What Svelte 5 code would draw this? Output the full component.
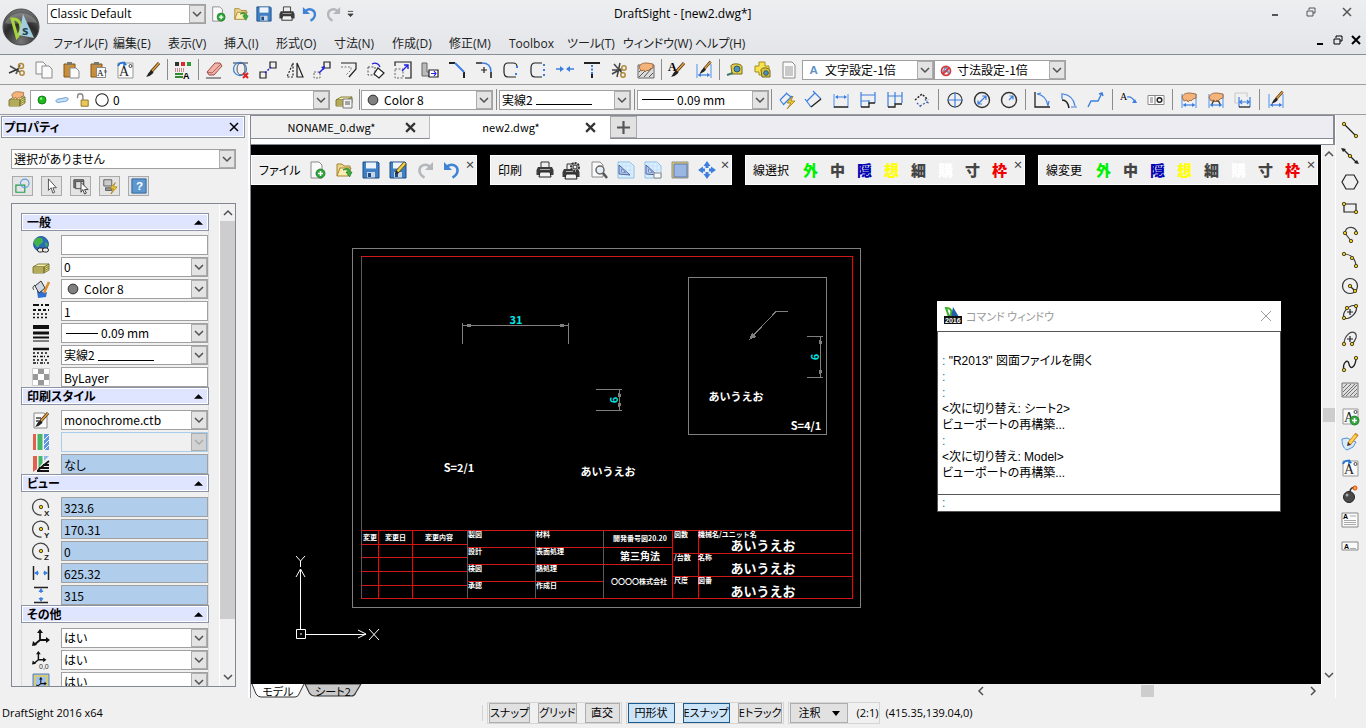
<script>
  const BLUE = "#3c7fe0";

  // small building blocks shared by several icons
  const dot = (x, y) =>
    `<circle cx="${x}" cy="${y}" r="1.7" fill="#f5c518" stroke="#3a3a20" stroke-width=".9"/>`;
  const line = (d, color = "#222", w = 1.2, extra = "") =>
    `<path d="${d}" fill="none" stroke="${color}" stroke-width="${w}" ${extra}/>`;
  const page = (x, y, w, h) =>
    `<path d="M${x} ${y}h${w - 3}l3 3v${h - 3}h-${w}z" fill="#fafafa" stroke="#8a8a8a"/>`;
  const dashed = 'stroke-dasharray="2 1.5"';
  const brush =
    '<path d="M16 2L8 11" stroke="#3a2a10" stroke-width="3"/><path d="M16 2L9 10" stroke="#e09a3c" stroke-width="1.8"/><path d="M8.500 9.500l2 2C8 15 5 15.500 3 16c2-2 2-5 5.500-6.500z" fill="#222"/>';
  const hand =
    '<path d="M2 6c2-4 5-4 8-4l6 1v4l-3 1-2 2-1-1-2 2-1-2-3 1z" fill="#f3b37a" stroke="#8f5a2c" stroke-width=".8"/>';
  const stack =
    '<path d="M1 9l5-3h11l-5 3z" fill="#f6f0b0" stroke="#77702c" stroke-width=".9"/><path d="M1 9v6h11V9zM12 9l5-3v6l-5 3z" fill="#e6dc80" stroke="#77702c" stroke-width=".9"/><path d="M1 11h11l5-3M1 13h11l5-3" fill="none" stroke="#77702c" stroke-width=".9"/>';
  const floppy =
    '<path d="M1 1h15l1 1v15H1z" fill="#3f7fc4" stroke="#1f4c86"/><path d="M4 1.500h10v6H4z" fill="#eef4fa"/><path d="M5 11h8v5.500H5z" fill="#c9d6e4"/><path d="M6 12h3v4H6z" fill="#1f4c86"/>';
  const folder =
    '<path d="M2 15V3h5l2 2h6v3" fill="#e9d58e" stroke="#a8852c"/><path d="M2 15l3-8h11l-3 8z" fill="#fbeeb4" stroke="#a8852c"/><path d="M8 9c3-1 5 0 5 2h-2l3.500 5L17 11h-1.500C15 7 11 6.500 8 9z" fill="#3fae3f" stroke="#1d7a25" stroke-width=".7"/>';
  const printer =
    '<path d="M5 1h8v6H5z" fill="#eee" stroke="#333"/><path d="M2 6h14l1.500 3v5H.5V9z" fill="#3c3c3c"/><path d="M4 11h10l1 5H3z" fill="#f2f2f2" stroke="#222"/><path d="M4 8.500h10" stroke="#aaa"/>';
  const drawingSheet =
    '<path d="M1 1h12l4 4v12H1z" fill="#dcefff" stroke="#8dbde6"/><path d="M1 5h14M1 9h16M1 13h16M5 1v16M9 1v16M13 1v16" stroke="#c3e0f7"/><path d="M2 4v9l11 1z" fill="#b7c9ea" stroke="#4a67a8"/><path d="M4.500 8v3l4 .5z" fill="#fff" stroke="#4a67a8" stroke-width=".7"/>';
  const extents = line("M2 3v14M16 3v14", "#6aa2ee", 1.2);
  const spanArrow =
    line("M4 14h10", BLUE) + `<path d="M2.500 14l3.500-2v4zM15.500 14L12 12v4z" fill="${BLUE}"/>`;
  const undoArrow = (color) =>
    `<path d="M4 5.500c5-4 11-.5 10.500 4.500-.2 3-2 5-5 6.500" fill="none" stroke="${color}" stroke-width="2.600"/><path d="M1 1v8h8z" fill="${color}"/>`;
  const plusBadge =
    '<circle cx="12.500" cy="12.500" r="4.500" fill="#2fa53a" stroke="#167a22" stroke-width=".8"/><path d="M12.500 10v5M10 12.500h5" stroke="#fff" stroke-width="1.500"/>';
  const centre = (letter) =>
    `<path d="M16.500 10a8 8 0 1 0-7 7" fill="none" stroke="#444" stroke-width="1.300"/>${dot(9, 9)}<text x="12" y="18" font-size="8" font-weight="700" fill="#222">${letter}</text>`;
  const axes =
    '<path d="M8 2v9h8M8 11l-6 5" fill="none" stroke="#111" stroke-width="1.800"/><path d="M8 0l3 4H5zM18 11l-4-3v6zM0 17l1-5 4 4z" fill="#111"/>';
  const noteA =
    '<path d="M2 2h15v15H2z" fill="#fafafa" stroke="#999"/><text x="3" y="15" font-size="14" font-family="Liberation Serif, serif" fill="#222">A</text>';

  const icons = {
    new: page(3, 1, 11, 16) + plusBadge,
    open: folder,
    save: floppy,
    print: printer,
    undo: undoArrow("#3f83d6"),
    redo: `<g transform="translate(18 0) scale(-1 1)">${undoArrow("#b3b6ba")}</g>`,
    cut: '<path d="M2 5l10 6M8 13l4-9" stroke="#555" stroke-width="1.800"/><path d="M1 12l9-4" stroke="#333" stroke-width="1.500"/><circle cx="13" cy="5" r="2.500" fill="none" stroke="#b08a3c" stroke-width="1.500"/><circle cx="14" cy="12" r="2.200" fill="none" stroke="#b08a3c" stroke-width="1.500"/>',
    copy: page(1, 1, 10, 12) + page(7, 5, 10, 12),
    paste:
      '<path d="M2 3h11v13H2z" fill="#c78f3d" stroke="#855714"/><path d="M5 1h5v3H5z" fill="#777"/>' +
      page(8, 7, 9, 10),
    pasteA:
      '<path d="M2 3h11v13H2z" fill="#c78f3d" stroke="#855714"/><path d="M5 1h5v3H5z" fill="#777"/><path d="M7.500 6.500h9v10h-9z" fill="#fafafa" stroke="#888"/><text x="8" y="15" font-size="9" font-family="Liberation Serif, serif">A°</text>',
    noteA:
      noteA +
      '<circle cx="14.500" cy="5" r="1.500" fill="none" stroke="#444"/><path d="M2 5c1-3 4-4 7-3" fill="none" stroke="#2273d6" stroke-width="1.800"/><path d="M7 5l4-1-3-4z" fill="#2273d6"/>',
    brush,
    matchAll:
      '<path d="M1 1h4v4H1z" fill="#333"/><path d="M7 1h4v4H7z" fill="#e02626"/><path d="M13 1h4v4h-4z" fill="#2f9a33"/><path d="M1 8h9M1 10h9" stroke="#a22" stroke-dasharray="1 1"/><path d="M1 13h8M1 16h8" stroke="#2f8a33" stroke-width="2"/><text x="9" y="18" font-size="9" font-weight="700">A</text>',
    erase:
      '<path d="M2 11L10 2h5l2 3-8 9H4z" fill="#f3b1a8" stroke="#9a5048"/><path d="M2 11l5 1 9-9" fill="none" stroke="#9a5048" stroke-width=".8"/><path d="M1 17h15" stroke="#777" stroke-width="1.500"/>',
    purge:
      line("M1 2h15", "#333", 1) +
      '<circle cx="8" cy="8" r="6.500" fill="none" stroke="#3f83d6" stroke-width="1.300"/><ellipse cx="9" cy="8" rx="4" ry="6" fill="none" stroke="#555"/><path d="M11 12l5 5M16 12l-5 5" stroke="#e02020" stroke-width="2"/>',
    copyObj:
      line("M1 11h6v6H1zM11 1h6v6h-6z") + line("M6 12l6-6", "#2222dd", 1.5, dashed),
    mirror: line("M7 2v14H1z", "#222", 1.2, dashed) + line("M11 2v14h6z"),
    move:
      line("M1 11h6v6H1z", "#666", 1, dashed) +
      line("M11 1h6v6h-6z") +
      line("M6 12l5-5", "#2222dd", 1.5) +
      '<path d="M12 5l-4 1 3 3z" fill="#22d"/>',
    offset: line("M1 2h15v6L9 16") + line("M1 6h10v3l-5 5", "#777", 1, dashed),
    rotate:
      line("M1 6h7v8H1z", "#555", 1, dashed) +
      '<path d="M11 7l6 5-5 5-5-4z" fill="#fff" stroke="#222" stroke-width="1.200"/>' +
      line("M5 3c4-2 7 0 8 3", "#22d", 1.2),
    scale:
      line("M1 5V1h16v16h-6") + line("M1 8h8v9H1z", "#666", 1, dashed) + line("M8 10l6-6M10 4h4v4", "#22d", 1.4),
    stretch:
      '<path d="M1 2h5v9h4v4H1z" fill="#bbb" stroke="#666"/>' +
      '<path d="M8 9h9v7H8z" fill="#fff" stroke="#222" stroke-width="1.200"/>' +
      line("M10 12.500h5M13 10l2 2.500-2 2.500", "#22d"),
    chamfer: line("M1 2h6M16 11v6", "#222", 2) + line("M7 2l9 9", BLUE, 2),
    fillet:
      line("M1 2h6M16 11v6", "#222", 1.6) + line("M7 2c6 0 9 3 9 9", BLUE, 1.4) + line("M9 6v6M6 9h6"),
    corner: line("M15 6c0-3-1-4-4-4H6C3 2 2 4 2 7v4c0 3 1 5 4 5h8") + `<path d="M14 5h2v2h-2zM13 12h2v2h-2z" fill="${BLUE}"/>`,
    corner2: line("M13 2H6C3 2 2 4 2 7v4c0 3 1 5 4 5h7") + `<path d="M14 3h2v2h-2zM14 8h2v2h-2zM14 13h2v2h-2z" fill="${BLUE}"/>`,
    join:
      line("M0 8h7M18 8h-7", BLUE, 1.5) + `<path d="M8 8L4 5v6zM10 8l4-3v6z" fill="${BLUE}"/>`,
    trim: line("M1 2h16", "#222", 2) + line("M9 4v9", BLUE, 2, dashed) + line("M9 13v4", "#222", 2),
    explode:
      line("M2 9h10M4 3l8 9M10 2L7 16M2 13l9-5", "#444", 1.5) +
      '<circle cx="14" cy="7" r="2.200" fill="none" stroke="#b08a3c" stroke-width="1.500"/><circle cx="13" cy="14" r="2.200" fill="none" stroke="#b08a3c" stroke-width="1.500"/>',
    editHatch:
      '<path d="M1 4h16v13H1z" fill="#ddd" stroke="#666"/><path d="M2 11l4-4M2 16l9-9M7 16l8-9M12 16l4-4" stroke="#555"/>' + hand,
    styleText: '<text x="0" y="10" font-size="12" font-weight="700" font-family="Liberation Serif, serif">A</text>' + brush,
    styleDim: extents + spanArrow + `<g transform="translate(2 -1) scale(.85)">${brush}</g>`,
    measure:
      '<path d="M5 5c0-3 11-3 11 1v7H6z" fill="#e7cf45" stroke="#766a1e"/><circle cx="11" cy="8" r="3" fill="#4f94b5" stroke="#265a74"/><path d="M7 12l-6 2" stroke="#476" stroke-width="2"/>',
    measure2:
      '<path d="M2 5h4V1h6v4h4v6h-4v3H6v-3H2z" fill="#f6e34e" stroke="#a18e1e"/><path d="M8 9c0-3 9-3 9 1v6H9z" fill="#d9c041" stroke="#766a1e"/><circle cx="13" cy="12" r="2.300" fill="#4f94b5" stroke="#265a74"/>',
    list: page(3, 1, 12, 16) + line("M5 6h8M5 8h8M5 10h8M5 12h8M5 14h8", "#999", 1),
    layers: stack + `<g transform="translate(2 -1) scale(.85)">${hand}</g>`,
    layerState: stack + '<path d="M8 8h9v9H8z" fill="#f4f4f4" stroke="#777"/><path d="M10 11h5M10 13h5" stroke="#555"/>',
    stack,
    dimSmart:
      line("M2 9l7-7M5 14l9-9M2 9l4 5M8 2l5 4", BLUE, 1.2) +
      '<path d="M15 5l-6 7h4l-4 6 8-8h-4z" fill="#f6d02c" stroke="#a07b10" stroke-width=".8"/>',
    dimAligned: line("M2 10l8-8M0 8l6 8M8 0l8 8", BLUE, 1.2) + line("M6 16l10-8", "#222", 1.5),
    dimLinear: extents + line("M2 16h14", "#222", 1.5) + `<path d="M4 6h10" stroke="${BLUE}"/><path d="M3 6l3-2v4zM15 6l-3-2v4z" fill="${BLUE}"/>`,
    dimBase: line("M2 1v15M10 9v4M16 1v11M2 4h14M2 10h8", BLUE) + line("M2 16h8v-4h6", "#222", 1.3),
    dimCont: line("M2 1v15M9 1v12M16 1v11M2 5h14", BLUE) + line("M2 16h7v-3h7", "#222", 1.3),
    dimJog: line("M2 9l7-6 6 6", "#222", 1.5, dashed) + line("M4 12l4 4M12 8l4 5M7 15l7-4", "#3a5fa8", 1.2, dashed),
    centreMark: '<circle cx="9" cy="9" r="7" fill="none" stroke="#333" stroke-width="1.200"/>' + line("M9 1v5M9 12v5M1 9h5M12 9h5M9 6v6M6 9h6", BLUE),
    diameter: '<circle cx="9" cy="9" r="7.500" fill="none" stroke="#333" stroke-width="1.400"/>' + line("M5 13l8-8M5 9.500v3.500h4M9 5h4v4", BLUE),
    radius: '<circle cx="9" cy="9" r="7.500" fill="none" stroke="#333" stroke-width="1.400"/>' + line("M9 9l4-4M9.500 5H13v3.500", BLUE),
    angle: line("M2 1v15h15", "#222", 1.3) + line("M4 3c7 1 10 5 11 12M4 3l4-1M15 15l1-5", BLUE),
    arcLen: line("M2 9c4 0 6 2 7 8", "#222", 1.6) + line("M2 2v6M3 3c7 1 11 5 12 12M11 16h6", BLUE),
    ordinate: line("M1 16l3-6h7l4-8M12 3l3-1 1 3", BLUE, 1.4),
    leader: '<text x="0" y="9" font-size="10" font-family="Liberation Serif, serif">A</text>' + line("M7 6c4-1 6 1 8 5", BLUE, 1.2) + `<path d="M17 12l-5 0 3-4z" fill="${BLUE}"/>`,
    tolerance: '<path d="M1 4.500h16v9H1z" fill="#fff" stroke="#888"/><path d="M3 7h3M3 9h3M3 11h3M8 5v9" stroke="#777"/><circle cx="12.500" cy="9" r="2.300" fill="none" stroke="#222" stroke-width="1.500"/>',
    dimEdit: extents + spanArrow + hand,
    dimEditA: extents + spanArrow + '<path d="M5 13l4-8 4 8M7 10h4" fill="none" stroke="#444" stroke-width="1.500"/>' + hand,
    dimUpdate: line("M1 2h12v4M1 2v10h3", "#ccc") + line("M5 6v10M16 6v10M6 11h9M8 9l-2 2 2 2M13 9l2 2-2 2", BLUE) + line("M5 16h11", "#222", 1.3),
    selShapes: '<path d="M1 8h10v8H1z" fill="none" stroke="#1f9d4b" stroke-width="1.300"/><circle cx="11" cy="6" r="4.800" fill="none" stroke="#5b9be0" stroke-width="1.300"/>',
    cursor: '<path d="M5 1v13l3-3 2 6 2-1-2-5h4z" fill="#fff" stroke="#444"/>',
    pickSet: '<path d="M1 2h11v9H1z" fill="#888" stroke="#333"/><path d="M3 4h9v8H3z" fill="#ddd" stroke="#444"/><path d="M9 5v11l2-3 2 5 2-1-2-4h4z" fill="#fff" stroke="#333"/>',
    quickSel: '<path d="M2 2h9v7H2z" fill="#ccc" stroke="#555"/><path d="M4 11h7v3H4z" fill="#999" stroke="#555"/><path d="M15 5l-6 7h4l-3 6 7-8h-4z" fill="#f6d02c" stroke="#a07b10" stroke-width=".8"/>',
    help: '<path d="M1 1h16v16H1z" fill="#5d97cf" stroke="#2a5f98"/><text x="5.500" y="14" font-size="13" font-weight="700" fill="#fff">?</text>',
    globe: '<circle cx="9" cy="8" r="7.500" fill="#2b6cc0" stroke="#164a8a" stroke-width=".8"/><path d="M5 2c4-1 6 0 6 3s-3 2-4 5-4-1-5-3 1-4 3-5zM13 6l3 2-2 4z" fill="#43b24a"/><rect x="5.500" y="12" width="6" height="4" rx="2" fill="#eee" stroke="#222"/><rect x="10.500" y="12" width="6" height="4" rx="2" fill="#eee" stroke="#222"/>',
    paint: '<path d="M5 11c4-3 6 3 10 1l-1 5-8 1z" fill="#2f6fd0"/><path d="M3 6l6-5 4 7-6 5z" fill="#cfd8e4" stroke="#333"/><path d="M3 5c-3 2-2 4-1 5" fill="none" stroke="#333"/><path d="M17 2l-5 11" stroke="#d98f2f" stroke-width="2.500"/>',
    lineScale: line("M1 3h16", "#111", 2, 'stroke-dasharray="6 2 2 2"') + line("M1 8h16", "#111", 2, 'stroke-dasharray="3 2"') + line("M1 12h16M1 15.500h16", "#111", 1.6, 'stroke-dasharray="2 2"'),
    weight: line("M1 3h16", "#111", 4) + line("M1 9h16", "#111", 3) + line("M1 13.500h16", "#111", 2) + line("M1 17h16", "#111", 1),
    lineStyle: line("M1 3h16", "#111", 2.5) + line("M1 7h16M1 14h16", "#111", 1.5, 'stroke-dasharray="2 2"') + line("M1 10.500h16M1 17h16", "#111", 1.5, 'stroke-dasharray="3 1 1 2"'),
    checker: '<path d="M0 0h18v18H0z" fill="#fff"/><path d="M6 0h6v6H6zM0 6h6v6H0zM12 6h6v6h-6zM6 12h6v6H6z" fill="#999"/><path d="M.5.5h17v17H.5z" fill="none" stroke="#ccc"/>',
    plotStyle: page(2, 2, 13, 15) + line("M4 7h5M4 10h3", "#444", 1.5) + brush,
    bars: '<path d="M1 1h3v16H1z" fill="#e2604c"/><path d="M5.500 1h5v16h-5z" fill="#45b768"/><path d="M12 1h5v16h-5z" fill="#5d97e0"/><path d="M12 7l5-5M12 12l5-5M12 17l5-5" stroke="#fff"/>',
    bars2: '<path d="M1 1h4v13l-4 3z" fill="#e2604c"/><path d="M6.500 1h4v7l-4 5z" fill="#45b768"/><path d="M12 1h5L12 6z" fill="#8db8ee"/><path d="M6 15l11-9M7 13h10M5 16h12M11 10h6" stroke="#111" stroke-width="1.800"/>',
    centreX: centre("X"),
    centreY: centre("Y"),
    centreZ: centre("Z"),
    width: line("M1.500 2v14M16.500 2v14", "#222", 1.5) + line("M3 9h4M11 9h4", BLUE) + `<path d="M2 9l4-2.500v5zM16 9l-4-2.500v5z" fill="${BLUE}"/>`,
    height: line("M2 1.500h14M2 16.500h14", "#222", 1.5) + line("M9 3v4M9 11v4", BLUE) + `<path d="M9 2l2.500 4h-5zM9 16l2.500-4h-5z" fill="${BLUE}"/>`,
    axes,
    axes0: `<g transform="scale(.8)">${axes}</g><text x="7" y="18" font-size="7" fill="#333">0,0</text>`,
    axesVp: `<path d="M1 1h16v16H1z" fill="#9fc2ee" stroke="#5f7fae"/><path d="M3 3h12v13H3z" fill="none" stroke="#e6cf4e" stroke-width="1.500"/><g transform="translate(4 4) scale(.6)">${axes}</g>`,
    saveAs: floppy + `<path d="M16 2L8 11" stroke="#5b4a10" stroke-width="4"/><path d="M16 2L8 11" stroke="#f2cf45" stroke-width="2.500"/><path d="M6 13l1-4 3 3z" fill="#222"/>`,
    printSet: `<g transform="translate(-1 2)">${printer}</g>` + '<circle cx="12" cy="6" r="4" fill="#bbb" stroke="#333" stroke-width="2" stroke-dasharray="2 1"/><circle cx="12" cy="6" r="2" fill="#eee" stroke="#333"/>',
    preview: page(2, 1, 11, 15) + '<circle cx="10" cy="9" r="4" fill="#e6eef6" stroke="#666" stroke-width="1.500"/><path d="M13 12l4 5" stroke="#555" stroke-width="2.500"/>',
    sheet: drawingSheet,
    sheet2: drawingSheet + '<path d="M10 12h7v5h-7z" fill="#f7f7f7" stroke="#888"/>',
    viewport: '<path d="M1 1h16v16H1z" fill="#e5cf63" stroke="#8f8f8f"/><path d="M3 3h13v13H3z" fill="#9ab6e2" stroke="#5a7ab5"/>',
    pan: `<path d="M9 0l3.500 5h-7zM9 18l3.500-5h-7zM0 9l5-3.500v7zM18 9l-5-3.500v7z" fill="${BLUE}"/>` + line("M9 4v3M9 11v3M4 9h3M11 9h3", BLUE, 3),
    line: line("M3 3l12 12") + dot(3, 3) + dot(15, 15),
    infLine: line("M2 2l14 14") + '<path d="M0 1l5 1-3 3zM18 17l-5-1 3-3z" fill="#222"/>' + dot(9, 9),
    polygon: line("M5 2h8l4 7-4 7H5L1 9z"),
    rect: line("M3 5h12v8H3z") + dot(3, 5) + dot(15, 13),
    polyline: line("M10 16L4 8c1-8 11-7 12 0", "#444") + dot(4, 8) + dot(15, 8) + dot(10, 16),
    arc: line("M3 3c7 0 12 5 12 13", "#444") + dot(3, 3) + dot(11, 7) + dot(15, 15),
    circle: '<circle cx="9" cy="9" r="7.500" fill="none" stroke="#333" stroke-width="1.200"/>' + line("M9 9l5 5") + dot(9, 9) + dot(14, 14),
    ellipse: '<ellipse cx="9" cy="9" rx="8" ry="4.500" transform="rotate(-45 9 9)" fill="none" stroke="#333" stroke-width="1.200"/>' + line("M9 6v6M6 9h6") + dot(6, 5) + dot(15, 3) + dot(3, 15),
    ellipseArc: line("M3 15C3 7 10 1 14 4c3 3 0 8-3 11", "#444") + line("M9 7v6M6 10h6") + dot(3, 15) + dot(11, 15),
    spline: line("M3 15C1 8 7 3 8 9s6 4 7-5", "#222", 1.4) + dot(3, 15) + dot(15, 3),
    hatch: '<path d="M1 2h16v14H1z" fill="#ddd" stroke="#777"/><path d="M2 7l4-4M2 11l8-8M2 15l12-12M5 15L16 4M9 15l7-7M13 15l3-3" stroke="#555" stroke-width=".8"/>',
    addNote: noteA + '<circle cx="14.500" cy="5" r="1.500" fill="none" stroke="#444"/>' + `<g transform="translate(1 1)">${plusBadge}</g>`,
    editNote: '<path d="M1 6l5-1 9 4-3 5-6 3c-4-2-5-6-5-11z" fill="#dcebfb" stroke="#4f8ed6"/><path d="M16 1L8 11" stroke="#c97b1c" stroke-width="4"/><path d="M15 2L8 11" stroke="#ffd34d" stroke-width="2.500"/><path d="M6 13l1-4 3 3z" fill="#333"/>',
    bomb: '<circle cx="8" cy="12" r="5.500" fill="#4a4a4a" stroke="#222"/><circle cx="6" cy="10" r="1.500" fill="#aaa"/><path d="M9 7c0-4 3-5 5-4" fill="none" stroke="#333" stroke-width="1.500"/><circle cx="14" cy="3" r="2" fill="#ffb02e" stroke="#e2401c"/>',
    note: '<path d="M1 2h16v14H1z" fill="#fafafa" stroke="#888"/><text x="2" y="8" font-size="7" font-weight="700">A</text>' + line("M9 5h6M3 9.500h12M3 11.500h12M3 13.500h12", "#aaa", 1),
    simpleNote: '<path d="M1 5h16v8H1z" fill="#fafafa" stroke="#888"/><text x="3" y="12" font-size="7" font-weight="700">A</text>' + line("M9 11.500h6", "#aaa", 1),
    textStyle: '<text x="4" y="14" font-size="13" font-weight="700" fill="#5f92c4">A</text>',
    dimStyle: '<text x="4" y="14" font-size="13" font-weight="700" fill="#5f92c4">A</text><circle cx="9" cy="10" r="5" fill="none" stroke="#d8383c" stroke-width="2"/><path d="M5.500 13.500l7-7" stroke="#d8383c" stroke-width="2"/>',
    color8: '<circle cx="9" cy="9" r="5.500" fill="#808080" stroke="#222"/>',
    white: '<circle cx="9" cy="9" r="7" fill="#fff" stroke="#222" stroke-width="1.200"/>',
    lamp: '<circle cx="9" cy="9" r="4.500" fill="#1dbb1d" stroke="#0a7a12"/><circle cx="8" cy="7.500" r="1.300" fill="#a6f7a6"/>',
    freeze: '<path d="M2 10c1-3 5-2 8-3s6-1 6 1-4 3-6 3-7 2-8-1z" fill="#c7e0f7" stroke="#5a94cc"/>',
    unlock: '<path d="M8 9h8v7H8z" fill="#e8c95a" stroke="#886a1c"/><path d="M10 9V5c0-4-6-4-6 0v2" fill="none" stroke="#888" stroke-width="1.600"/>',
  };

  const menus = [
    "ファイル(F)", "編集(E)", "表示(V)", "挿入(I)", "形式(O)", "寸法(N)",
    "作成(D)", "修正(M)", "Toolbox", "ツール(T)", "ウィンドウ(W)", "ヘルプ(H)",
  ];
  const quick = ["new", "open", "save", "print", "undo", "redo"];
  const standard = [
    ["cut", "copy", "paste", "pasteA", "noteA", "brush"],
    ["matchAll"],
    ["erase", "purge", "copyObj", "mirror", "move", "offset", "rotate", "scale", "stretch",
      "chamfer", "fillet", "corner", "corner2", "join", "trim", "explode", "editHatch"],
    ["styleText", "styleDim"],
    ["measure", "measure2", "list"],
  ];
  const dims = [
    ["dimSmart", "dimAligned", "dimLinear", "dimBase", "dimCont", "dimJog"],
    ["centreMark", "diameter", "radius"],
    ["angle", "arcLen", "ordinate"],
    ["leader", "tolerance"],
    ["dimEdit", "dimEditA", "dimUpdate"],
    ["styleDim"],
  ];
  const draw = [
    "line", "infLine", "polygon", "rect", "polyline", "arc", "circle", "ellipse", "ellipseArc",
    "spline", "hatch", "addNote", "editNote", "noteA", "bomb", "note", "simpleNote",
  ];
  const sections = [
    {
      title: "一般",
      rows: [
        { icon: "globe", value: "" },
        { icon: "stack", value: "0", list: true },
        { icon: "paint", value: "Color 8", list: true, lead: ["color8"] },
        { icon: "lineScale", value: "1" },
        { icon: "weight", value: "0.09 mm", list: true, rule: "before" },
        { icon: "lineStyle", value: "実線2", list: true, rule: "after" },
        { icon: "checker", value: "ByLayer" },
      ],
    },
    {
      title: "印刷スタイル",
      rows: [
        { icon: "plotStyle", value: "monochrome.ctb", list: true },
        { icon: "bars", value: "", list: true, off: true },
        { icon: "bars2", value: "なし", locked: true },
      ],
    },
    {
      title: "ビュー",
      rows: [
        { icon: "centreX", value: "323.6", locked: true },
        { icon: "centreY", value: "170.31", locked: true },
        { icon: "centreZ", value: "0", locked: true },
        { icon: "width", value: "625.32", locked: true },
        { icon: "height", value: "315", locked: true },
      ],
    },
    {
      title: "その他",
      rows: [
        { icon: "axes", value: "はい", list: true },
        { icon: "axes0", value: "はい", list: true },
        { icon: "axesVp", value: "はい", list: true },
      ],
    },
  ];
  const pens = [
    ["外", "#00f000"], ["中", "#444"], ["隠", "#0000b4"], ["想", "#ffff00"],
    ["細", "#444"], ["購", "#fff"], ["寸", "#444"], ["枠", "#f00000"],
  ];
  const log = [
    "", ': "R2013" 図面ファイルを開く', ":", ":", "<次に切り替え: シート2>",
    "ビューポートの再構築...", ":", "<次に切り替え: Model>", "ビューポートの再構築...",
  ];
  const labels = [
    [363, 540, "変更"], [385, 540, "変更日"], [425, 540, "変更内容"],
    [468, 537, "製図"], [468, 554, "設計"], [468, 571, "検図"], [468, 588, "承認"],
    [536, 537, "材料"], [536, 554, "表面処理"], [536, 571, "熱処理"], [536, 588, "作成日"],
    [674, 537, "図数"], [674, 560, "/台数"], [674, 583, "尺度"],
    [698, 537, "機械名/ユニット名"], [698, 560, "名称"], [698, 583, "図番"],
    [613, 541, "開発番号図20.20"], [611, 584, "〇〇〇〇株式会社"],
  ];
</script>

{#snippet icon(name)}
  <svg class="icon" viewBox="0 0 18 18" aria-hidden="true">{@html icons[name]}</svg>
{/snippet}

{#snippet tool(name)}
  <button class="tool" aria-label={name}>{@render icon(name)}</button>
{/snippet}

{#snippet chevron(d)}
  <svg class="chevron" viewBox="0 0 10 10" aria-hidden="true"><path {d} /></svg>
{/snippet}

{#snippet combo(label, value, lead = [], rule = "", off = false)}
  <div class="combo" class:off>
    {#each lead as name}{@render icon(name)}{/each}
    {#if rule === "before"}<i class="rule"></i>{/if}
    <select aria-label={label} disabled={off} class:snug={rule === "after"}>
      <option>{value}</option>
    </select>
    {#if rule === "after"}<i class="rule after"></i>{/if}
    <span class="drop">{@render chevron("M1 3l4 4 4-4")}</span>
  </div>
{/snippet}

{#snippet penBar(title)}
  <div class="float">
    <span class="name">{title}</span>
    {#each pens as [glyph, color]}
      <button class="tool pen" style:color>{glyph}</button>
    {/each}
    <button class="shut" aria-label="close">×</button>
  </div>
{/snippet}

<div class="app">
  <header>
    <svg class="logo" viewBox="0 0 38 38" aria-hidden="true">
      <defs>
        <radialGradient id="ball" cx=".5" cy=".9" r=".9">
          <stop offset="0" stop-color="#777" />
          <stop offset=".55" stop-color="#2a2a2a" />
          <stop offset="1" stop-color="#777" />
        </radialGradient>
      </defs>
      <circle cx="19" cy="19" r="18" fill="url(#ball)" stroke="#4c4c4c" />
      <path d="M3 15a17 15 0 0 1 32 0c-9-3-23 3-32 0z" fill="#fff" opacity=".22" />
      <path d="M10 11c9-1 12 10 5 18z" fill="none" stroke="#a5d43c" stroke-width="3" />
      <path d="M21 6l11 24-15-3z" fill="#a9d4e6" opacity=".95" />
      <text x="20" y="27" font-size="13" font-weight="700" fill="#24444f">s</text>
    </svg>
    <div class="head">
      <div class="quick">
        {@render combo("workspace", "Classic Default")}
        {#each quick as name}{@render tool(name)}{/each}
        <svg class="more" viewBox="0 0 8 8" aria-hidden="true"><path d="M1 1h6M1 4h6L4 7z" /></svg>
        <h1>DraftSight - [new2.dwg*]</h1>
        <div class="win">
          <button aria-label="minimise"><svg viewBox="0 0 10 10"><path d="M2 8h6" stroke-width="2" /></svg></button>
          <button aria-label="restore"><svg viewBox="0 0 10 10"><path d="M3 3V1h6v5H7M1 4h6v5H1z" /></svg></button>
          <button aria-label="close"><svg viewBox="0 0 10 10"><path d="M1 1l8 8M9 1L1 9" stroke-width="1.5" /></svg></button>
        </div>
      </div>
      <nav>
        {#each menus as item}<a href="#menu">{item}</a>{/each}
        <div class="win doc">
          <button aria-label="minimise drawing"><svg viewBox="0 0 10 10"><path d="M2 9h6" stroke-width="2" /></svg></button>
          <button aria-label="restore drawing"><svg viewBox="0 0 10 10"><path d="M3 3V1h6v5H7M1 4h6v5H1z" /></svg></button>
          <button aria-label="close drawing"><svg viewBox="0 0 10 10"><path d="M1 1l8 8M9 1L1 9" stroke-width="2" /></svg></button>
        </div>
      </nav>
    </div>
  </header>

  <div class="bar">
    {#each standard as group, i}
      {#if i}<i class="sep"></i>{/if}
      {#each group as name}{@render tool(name)}{/each}
    {/each}
    <div class="w-style">{@render combo("text style", "文字設定-1倍", ["textStyle"])}</div>
    <div class="w-style">{@render combo("dimension style", "寸法設定-1倍", ["dimStyle"])}</div>
  </div>

  <div class="bar">
    {@render tool("layers")}
    <div class="w-layer">{@render combo("layer", "0", ["lamp", "freeze", "unlock", "white"])}</div>
    {@render tool("layerState")}
    <i class="sep"></i>
    <div class="w-style">{@render combo("color", "Color 8", ["color8"])}</div>
    <i class="sep wide"></i>
    <div class="w-style">{@render combo("line style", "実線2", [], "after")}</div>
    <i class="sep wide"></i>
    <div class="w-style">{@render combo("line weight", "0.09 mm", [], "before")}</div>
    {#each dims as group, i}
      <i class="sep" class:wide={i}></i>
      {#each group as name}{@render tool(name)}{/each}
    {/each}
  </div>

  <main>
    <aside>
      <div class="cap">
        <h2>プロパティ</h2>
        <button aria-label="close properties"><svg viewBox="0 0 10 10"><path d="M1 1l8 8M9 1L1 9" /></svg></button>
      </div>
      <div class="pick">{@render combo("selection", "選択がありません")}</div>
      <div class="modes">
        {#each ["selShapes", "cursor", "pickSet", "quickSel", "help"] as name}
          <button aria-label={name}>{@render icon(name)}</button>
        {/each}
      </div>
      <div class="props">
        <div class="list">
          {#each sections as section}
            <section>
              <h3>{section.title}<svg viewBox="0 0 10 5" aria-hidden="true"><path d="M0 5l5-5 5 5z" /></svg></h3>
              {#each section.rows as row}
                <div class="row">
                  {@render icon(row.icon)}
                  {#if row.list}
                    {@render combo(row.icon, row.value, row.lead, row.rule, row.off)}
                  {:else}
                    <input aria-label={row.icon} value={row.value} readonly={row.locked} />
                  {/if}
                </div>
              {/each}
            </section>
          {/each}
        </div>
        <div class="vscroll">
          {@render chevron("M1 7l4-4 4 4")}
          <i class="thumb"></i>
          {@render chevron("M1 3l4 4 4-4")}
        </div>
      </div>
    </aside>

    <div class="work">
      <div class="tabs">
        <div class="tab"><span>NONAME_0.dwg*</span><button aria-label="close tab"><svg viewBox="0 0 10 10"><path d="M1 1l8 8M9 1L1 9" stroke-width="2" /></svg></button></div>
        <div class="tab on"><span>new2.dwg*</span><button aria-label="close tab"><svg viewBox="0 0 10 10"><path d="M1 1l8 8M9 1L1 9" stroke-width="2" /></svg></button></div>
        <button class="add" aria-label="new tab"><svg viewBox="0 0 12 12"><path d="M6 0v12M0 6h12" stroke-width="2" /></svg></button>
      </div>

      <div class="stage">
        <div class="canvas">
          <svg class="drawing" aria-label="drawing">
            <g transform="translate(-251 -145)" fill="none" shape-rendering="crispEdges">
              <g stroke="#808080">
                <path d="M352.500 248.500h508v359h-508z" />
                <path d="M688.500 277.500h138v157h-138z" />
                <path d="M361.500 256v342M467.500 530v68M535.500 530v68M603.500 530v68" stroke="#5a5a5a" />
                <path d="M462.500 323v21M568.500 323v21M462 325.500h106M596 389.500h26M596 410.500h26M619.500 390v20M807 336.500h16M807 377.500h16M820.500 337v40" />
                <path d="M776 311.500h12M776 311.500L750 339" />
              </g>
              <path d="M361 256.500h492M361 598.500h492M361 530.500h491M361 544.500h106M361 557.500h106M361 571.500h106M361 585.500h106M467 547.500h205M467 564.500h205M467 581.500h136M672 553.500h180M672 576.500h180" stroke="#d01818" />
              <path d="M378.500 530v68M412.500 530v68M672.500 530v68M698.500 530v68M852.500 256v342" stroke="#ff0000" />
              <path d="M463 325.500l8-2v4zM568 325.500l-8-2v4zM619.500 390l-2 7h4zM619.500 410l-2-7h4zM820.500 337l-2 7h4zM820.500 377l-2-7h4zM749 340l3-7 4 4z" fill="#808080" />
            </g>
            <g transform="translate(-251 -145)">
              <path d="M300.500 629v-59M296 577l4.500-8 4.500 8M305 634.500h61M358 630l8 4-8 4M296.500 629.500h9v9h-9z" fill="none" stroke="#fff" />
              <path d="M300 634h2M296 556l4.500 5 4.500-5M300.500 561v6M369 629l10 11M379 629l-10 11" fill="none" stroke="#fff" />
              <g class="cyan">
                <text x="516" y="324">31</text>
                <text transform="translate(618 400) rotate(-90)">6</text>
                <text transform="translate(819 357) rotate(-90)">6</text>
              </g>
              <g>
                <text x="736" y="401">あいうえお</text>
                <text x="608" y="476">あいうえお</text>
                <text x="806" y="430">S=4/1</text>
                <text x="459" y="472">S=2/1</text>
              </g>
              <g class="big">
                <text x="763" y="550">あいうえお</text>
                <text x="763" y="573">あいうえお</text>
                <text x="763" y="596">あいうえお</text>
              </g>
              <g class="tiny">
                {#each labels as [x, y, label]}<text {x} {y}>{label}</text>{/each}
              </g>
              <text class="method" x="640" y="560">第三角法</text>
            </g>
          </svg>

          <div class="floats">
            <div class="float">
              <span class="name">ファイル</span>
              {#each ["new", "open", "save", "saveAs", "redo", "undo"] as name}{@render tool(name)}{/each}
              <button class="shut" aria-label="close">×</button>
            </div>
            <div class="float">
              <span class="name short">印刷</span>
              {#each ["print", "printSet", "preview", "sheet", "sheet2", "viewport", "pan"] as name}{@render tool(name)}{/each}
              <button class="shut" aria-label="close">×</button>
            </div>
            {@render penBar("線選択")}
            {@render penBar("線変更")}
          </div>

          <div class="command">
            <div class="title">
              <svg viewBox="0 0 18 18" aria-hidden="true">
                <path d="M2 1c6 0 7 5 3 9z" fill="#fff" stroke="#3fae2a" stroke-width="2" />
                <path d="M9 0l6 10H7z" fill="#1f5fa8" />
                <path d="M0 9h18v8H0z" fill="#111" />
                <text x="1" y="16" font-size="7" font-weight="700" fill="#fff">2016</text>
              </svg>
              <span>コマンド ウィンドウ</span>
              <button aria-label="close command window"><svg viewBox="0 0 10 10"><path d="M0 0l10 10M10 0L0 10" /></svg></button>
            </div>
            <div class="log">
              {#each log as text}
                <p>{#if text.startsWith(":")}<b>:</b>{text.slice(1)}{:else}{text}{/if}</p>
              {/each}
            </div>
            <label class="prompt"><b>:</b><input aria-label="command" /></label>
          </div>
        </div>
        <div class="vscroll side">
          {@render chevron("M1 7l4-4 4 4")}
          <i class="thumb"></i>
          {@render chevron("M1 3l4 4 4-4")}
        </div>
      </div>

      <div class="sheets">
        <button class="sheet">
          <svg viewBox="0 0 54 14" preserveAspectRatio="none" aria-hidden="true"><path d="M1 0l4 10q2 3 5 3h34q3 0 4-3l5-10" fill="#fff" /></svg>
          <span>モデル</span>
        </button>
        <button class="sheet">
          <svg viewBox="0 0 54 14" preserveAspectRatio="none" aria-hidden="true"><path d="M1 0l4 9q2 3 5 3h34q3 0 4-3l5-9z" fill="#c8c8c8" /></svg>
          <span>シート2</span>
        </button>
        <div class="hscroll">
          {@render chevron("M7 1L3 5l4 4")}
          <i class="thumb"></i>
          {@render chevron("M3 1l4 4-4 4")}
        </div>
      </div>
    </div>

    <div class="draw">
      {#each draw as name}{@render tool(name)}{/each}
    </div>
  </main>

  <footer>
    <span class="version">DraftSight 2016 x64</span>
    <div class="group">
      <button>スナップ</button>
      <button>グリッド</button>
      <button>直交</button>
    </div>
    <div class="group">
      <button class="on">円形状</button>
      <button class="on">Eスナップ</button>
      <button>Eトラック</button>
    </div>
    <div class="group">
      <button class="scale">注釈<svg viewBox="0 0 8 5" aria-hidden="true"><path d="M0 0h8L4 5z" /></svg></button>
      <span>(2:1)</span>
    </div>
    <span class="coords">(415.35,139.04,0)</span>
  </footer>
</div>

<style>
  :global(body) {
    margin: 0;
    overflow: hidden;
  }
  .app {
    display: flex;
    flex-direction: column;
    height: 100vh;
    background: #f0f0f0;
    color: #000;
    font: 12px/16px "Noto Sans CJK JP", sans-serif;
    font-feature-settings: "palt";
  }
  .app :global(*) {
    box-sizing: border-box;
  }
  button {
    display: flex;
    align-items: center;
    justify-content: center;
    padding: 0;
    border: 0;
    background: none;
    color: inherit;
    font: inherit;
    white-space: nowrap;
  }
  h1, h2, h3, p {
    margin: 0;
    font-size: 12px;
  }
  .icon {
    flex: none;
    width: 18px;
    height: 18px;
    overflow: visible;
    font-family: "Liberation Sans", sans-serif;
  }
  .tool {
    flex: none;
    width: 27px;
    height: 26px;
  }
  .chevron {
    width: 10px;
    height: 10px;
    fill: none;
    stroke: #505050;
    stroke-width: 1.5;
  }

  header {
    display: flex;
    flex: none;
    height: 55px;
    border-bottom: 1px solid #868e97;
    background: linear-gradient(#eceef0, #e3e5e9);
    font-family: "Open Sans", "Noto Sans CJK JP", sans-serif;
  }
  .logo {
    flex: none;
    width: 38px;
    height: 38px;
    margin: 8px 6px 0 2px;
  }
  .head {
    display: flex;
    flex: 1;
    flex-direction: column;
  }
  .quick {
    display: flex;
    align-items: center;
    height: 28px;
    padding-left: 1px;
  }
  .quick .combo {
    width: 159px;
  }
  .quick .tool {
    width: 23px;
  }
  .quick .icon {
    width: 16px;
    height: 16px;
  }
  .more {
    width: 7px;
    height: 8px;
    margin-left: 3px;
    fill: #444;
    stroke: #444;
  }
  h1 {
    flex: 1;
    padding-left: 260px;
    font-weight: 400;
  }
  .win {
    display: flex;
    gap: 26px;
    margin: -4px 14px 0 0;
  }
  .win svg, .cap svg, .tab svg, .add svg {
    width: 10px;
    height: 10px;
    fill: none;
    stroke: #555;
  }
  .win.doc {
    gap: 8px;
    margin: -8px 5px 0 auto;
  }
  .doc svg {
    stroke: #000;
  }
  nav {
    display: grid;
    grid-template-columns: 60px 55px 56px 52px 58px 58px 57px 60px 58px 56px 72px 60px 1fr;
    align-items: center;
    height: 26px;
    padding: 6px 0 0 7px;
  }
  nav a {
    color: #222;
    text-decoration: none;
    white-space: nowrap;
  }

  .bar {
    display: flex;
    flex: none;
    align-items: center;
    height: 30px;
    padding-left: 3px;
    border-bottom: 1px solid #9c9ca0;
  }
  .sep {
    align-self: stretch;
    width: 1px;
    margin: 4px 1px 4px 2px;
    background: #8c8c8c;
  }
  .sep.wide {
    margin: 4px 2px 4px 3px;
  }
  .w-style {
    width: 132px;
  }
  .w-layer {
    width: 300px;
  }
  .combo {
    display: flex;
    align-items: center;
    height: 20px;
    padding-left: 2px;
    border: 1px solid #a0a0a0;
    background: #fff;
  }
  .combo .icon {
    width: 18px;
    height: 16px;
    margin-right: 2px;
  }
  select {
    flex: 1;
    min-width: 0;
    height: 18px;
    padding: 0;
    border: 0;
    background: none;
    appearance: none;
    color: #000;
    font: inherit;
    line-height: 18px;
    opacity: 1;
  }
  .snug {
    flex: none;
  }
  .drop {
    display: flex;
    align-items: center;
    justify-content: center;
    flex: none;
    width: 16px;
    height: 18px;
    border: 1px solid #adadad;
    background: #e3e3e3;
  }
  .rule {
    flex: none;
    width: 32px;
    height: 1px;
    margin: 0 3px 0 2px;
    background: #000;
  }
  .rule.after {
    width: 56px;
    margin: 10px auto 0 3px;
  }
  .off {
    border-color: #a9cdec;
    background: #f0f0f0;
  }
  .off .drop {
    background: #d2d2d2;
  }
  .off .chevron {
    stroke: #aaa;
  }

  main {
    display: flex;
    flex: 1;
    min-height: 0;
  }
  aside {
    display: flex;
    flex: none;
    flex-direction: column;
    width: 250px;
    padding: 1px 3px 11px 1px;
    border-right: 2px solid #fff;
  }
  .cap {
    display: flex;
    align-items: center;
    justify-content: space-between;
    height: 22px;
    padding: 0 5px 0 2px;
    border: 1px solid #8c94a4;
    background: #dfe4ff;
    box-shadow: inset 0 0 0 1px #fff;
  }
  .cap svg {
    stroke: #000;
    stroke-width: 1.5;
  }
  .pick {
    margin: 11px 9px 0 10px;
  }
  .modes {
    display: flex;
    gap: 8px;
    margin: 7px 11px;
  }
  .modes button {
    width: 21px;
    height: 20px;
    border: 1px solid #aaa;
    background: #e4e4e4;
  }
  .modes .icon {
    width: 16px;
    height: 16px;
  }
  .props {
    display: flex;
    flex: 1;
    justify-content: space-between;
    min-height: 0;
    margin: 0 9px 0 10px;
    border: 1px solid #828790;
  }
  .list {
    width: 188px;
    margin: 9px 0 0 9px;
    overflow: hidden;
  }
  section {
    border: solid #ddd;
    border-width: 0 1px;
  }
  h3 {
    display: flex;
    align-items: center;
    justify-content: space-between;
    height: 18px;
    margin: 0 -1px 3px;
    padding: 0 5px;
    border: 1px solid #8c94a4;
    background: #dfe4ff;
    box-shadow: inset 0 0 0 1px #fff;
  }
  h3 svg {
    width: 9px;
    height: 5px;
  }
  section:nth-child(n + 2) h3 {
    margin-top: -1px;
    margin-bottom: 4px;
  }
  .row {
    display: grid;
    grid-template-columns: 18px 147px;
    gap: 11px;
    align-items: center;
    height: 22px;
    padding-left: 10px;
  }
  .row input {
    min-width: 0;
    height: 20px;
    padding: 0 2px;
    border: 1px solid #a0a0a0;
    background: #fff;
    color: #000;
    font: inherit;
  }
  .row input:read-only {
    background: #b0cdeb;
  }
  .vscroll {
    display: flex;
    flex-direction: column;
    align-items: center;
    width: 16px;
    padding: 4px 0;
    border-left: 1px solid #fff;
  }
  .vscroll .thumb {
    width: 15px;
    height: 398px;
    margin: 3px 0 auto;
    background: #cdcdcd;
  }

  .work {
    display: flex;
    flex: 1;
    flex-direction: column;
    min-width: 0;
    border-left: 1px solid #828790;
  }
  .tabs {
    display: flex;
    flex: none;
    height: 30px;
    padding-bottom: 5px;
    border: solid #868a94;
    border-width: 1px 2px 1px 0;
    background: linear-gradient(#edecf2 22px, #868a94 22px, #868a94 23px, #fff 23px);
  }
  .tab {
    display: flex;
    align-items: center;
    width: 179px;
    padding: 0 13px 0 7px;
    border-right: 1px solid #bbb;
    border-bottom: 1px solid #868a94;
    background: #f0f0f0;
  }
  .tab.on {
    width: 180px;
    border-color: #fff;
    background: #fff;
  }
  .tab span {
    flex: 1;
    font-size: 11px;
    text-align: center;
  }
  .tab svg {
    width: 11px;
    height: 11px;
    stroke: #333;
  }
  .add {
    width: 27px;
    height: 22px;
    border: 1px solid #aaa;
    background: #e1e1e1;
  }
  .add svg {
    width: 13px;
    height: 13px;
  }
  .stage {
    display: flex;
    flex: 1;
    min-height: 0;
  }
  .canvas {
    position: relative;
    flex: 1;
    min-width: 0;
    overflow: hidden;
    background: #000;
  }
  .drawing {
    position: absolute;
    inset: 0;
    width: 100%;
    height: 100%;
    font-feature-settings: normal;
  }
  .drawing text {
    font-weight: 700;
    font-size: 11px;
    fill: #fff;
    text-anchor: middle;
  }
  .drawing .cyan text {
    fill: #00e5e5;
  }
  .drawing .big text {
    font-size: 13px;
  }
  .drawing .tiny text {
    font-size: 7px;
    text-anchor: start;
  }
  .drawing .method {
    font-size: 10px;
  }
  .side {
    width: 14px;
  }
  .side .thumb {
    width: 12px;
    height: 14px;
    margin: auto 0;
  }
  .floats {
    position: relative;
    display: flex;
    gap: 13px;
    padding-top: 10px;
  }
  .float {
    display: flex;
    flex: none;
    align-items: center;
    height: 30px;
    padding: 0 1px 0 7px;
    border: 1px solid #fff;
    background: #f0f0f0;
  }
  .name {
    width: 44px;
  }
  .name.short {
    width: 33px;
  }
  .pen {
    font-weight: 900;
    font-size: 15px;
  }
  .shut {
    align-self: flex-start;
    width: 10px;
    height: 18px;
    color: #444;
    font-weight: 700;
    font-size: 10px;
  }

  .command {
    position: absolute;
    top: 156px;
    left: 686px;
    width: 344px;
    background: #fff;
  }
  .title {
    display: flex;
    align-items: center;
    gap: 4px;
    height: 30px;
    padding: 0 10px 0 7px;
    color: #999;
    font-size: 11px;
  }
  .title svg {
    width: 18px;
    height: 18px;
    font-family: "Liberation Sans", sans-serif;
  }
  .title button {
    margin-left: auto;
  }
  .title button svg {
    width: 10px;
    height: 10px;
    stroke: #999;
  }
  .log, .prompt {
    border: 1px solid #555;
    font-family: "Liberation Sans", "Noto Sans CJK JP", sans-serif;
  }
  .log {
    height: 164px;
    padding: 5px 4px;
  }
  .log p {
    height: 16px;
  }
  b {
    color: #1a6fb5;
    font-weight: 400;
  }
  .prompt {
    display: flex;
    height: 17px;
    padding-left: 4px;
    border-top: 0;
  }
  .prompt input {
    flex: 1;
    border: 0;
    outline: 0;
    background: none;
  }

  .sheets {
    display: flex;
    flex: none;
    height: 14px;
  }
  .sheet {
    position: relative;
    width: 54px;
    height: 14px;
  }
  .sheet:nth-child(2) {
    width: 58px;
    margin-left: -1px;
  }
  .sheet svg {
    position: absolute;
    inset: 0;
    width: 100%;
    height: 100%;
    stroke: #333;
  }
  .sheet span {
    position: relative;
    font-size: 11px;
    line-height: 12px;
  }
  .hscroll {
    display: flex;
    align-items: center;
    width: 359px;
    margin-left: auto;
    padding: 0 17px 0 0;
  }
  .hscroll .thumb {
    width: 13px;
    height: 12px;
    margin: 0 auto;
    background: #cdcdcd;
  }

  .draw {
    display: flex;
    flex: none;
    flex-direction: column;
    width: 31px;
    padding: 2px 0 0;
    border-left: 1px solid #fff;
  }

  footer {
    display: flex;
    flex: none;
    align-items: center;
    height: 30px;
    padding-left: 2px;
    font-family: "Open Sans", "Noto Sans CJK JP", sans-serif;
    font-size: 11px;
  }
  .version {
    width: 481px;
    border-right: 1px solid #d5d5d5;
  }
  .group {
    display: flex;
    align-items: center;
    gap: 8px;
    height: 22px;
    margin-left: 4px;
    padding: 0 1px;
    border: 1px solid #d5d5d5;
  }
  .group button {
    height: 20px;
    min-width: 35px;
    border: 1px solid #adadad;
    background: #e1e1e1;
  }
  .group .on {
    min-width: 47px;
    border-color: #1b5a8c;
    background: #cce4f7;
  }
  .group .scale {
    gap: 12px;
    width: 58px;
  }
  .scale svg {
    width: 8px;
    height: 5px;
  }
  .coords {
    margin-left: 5px;
  }
</style>
